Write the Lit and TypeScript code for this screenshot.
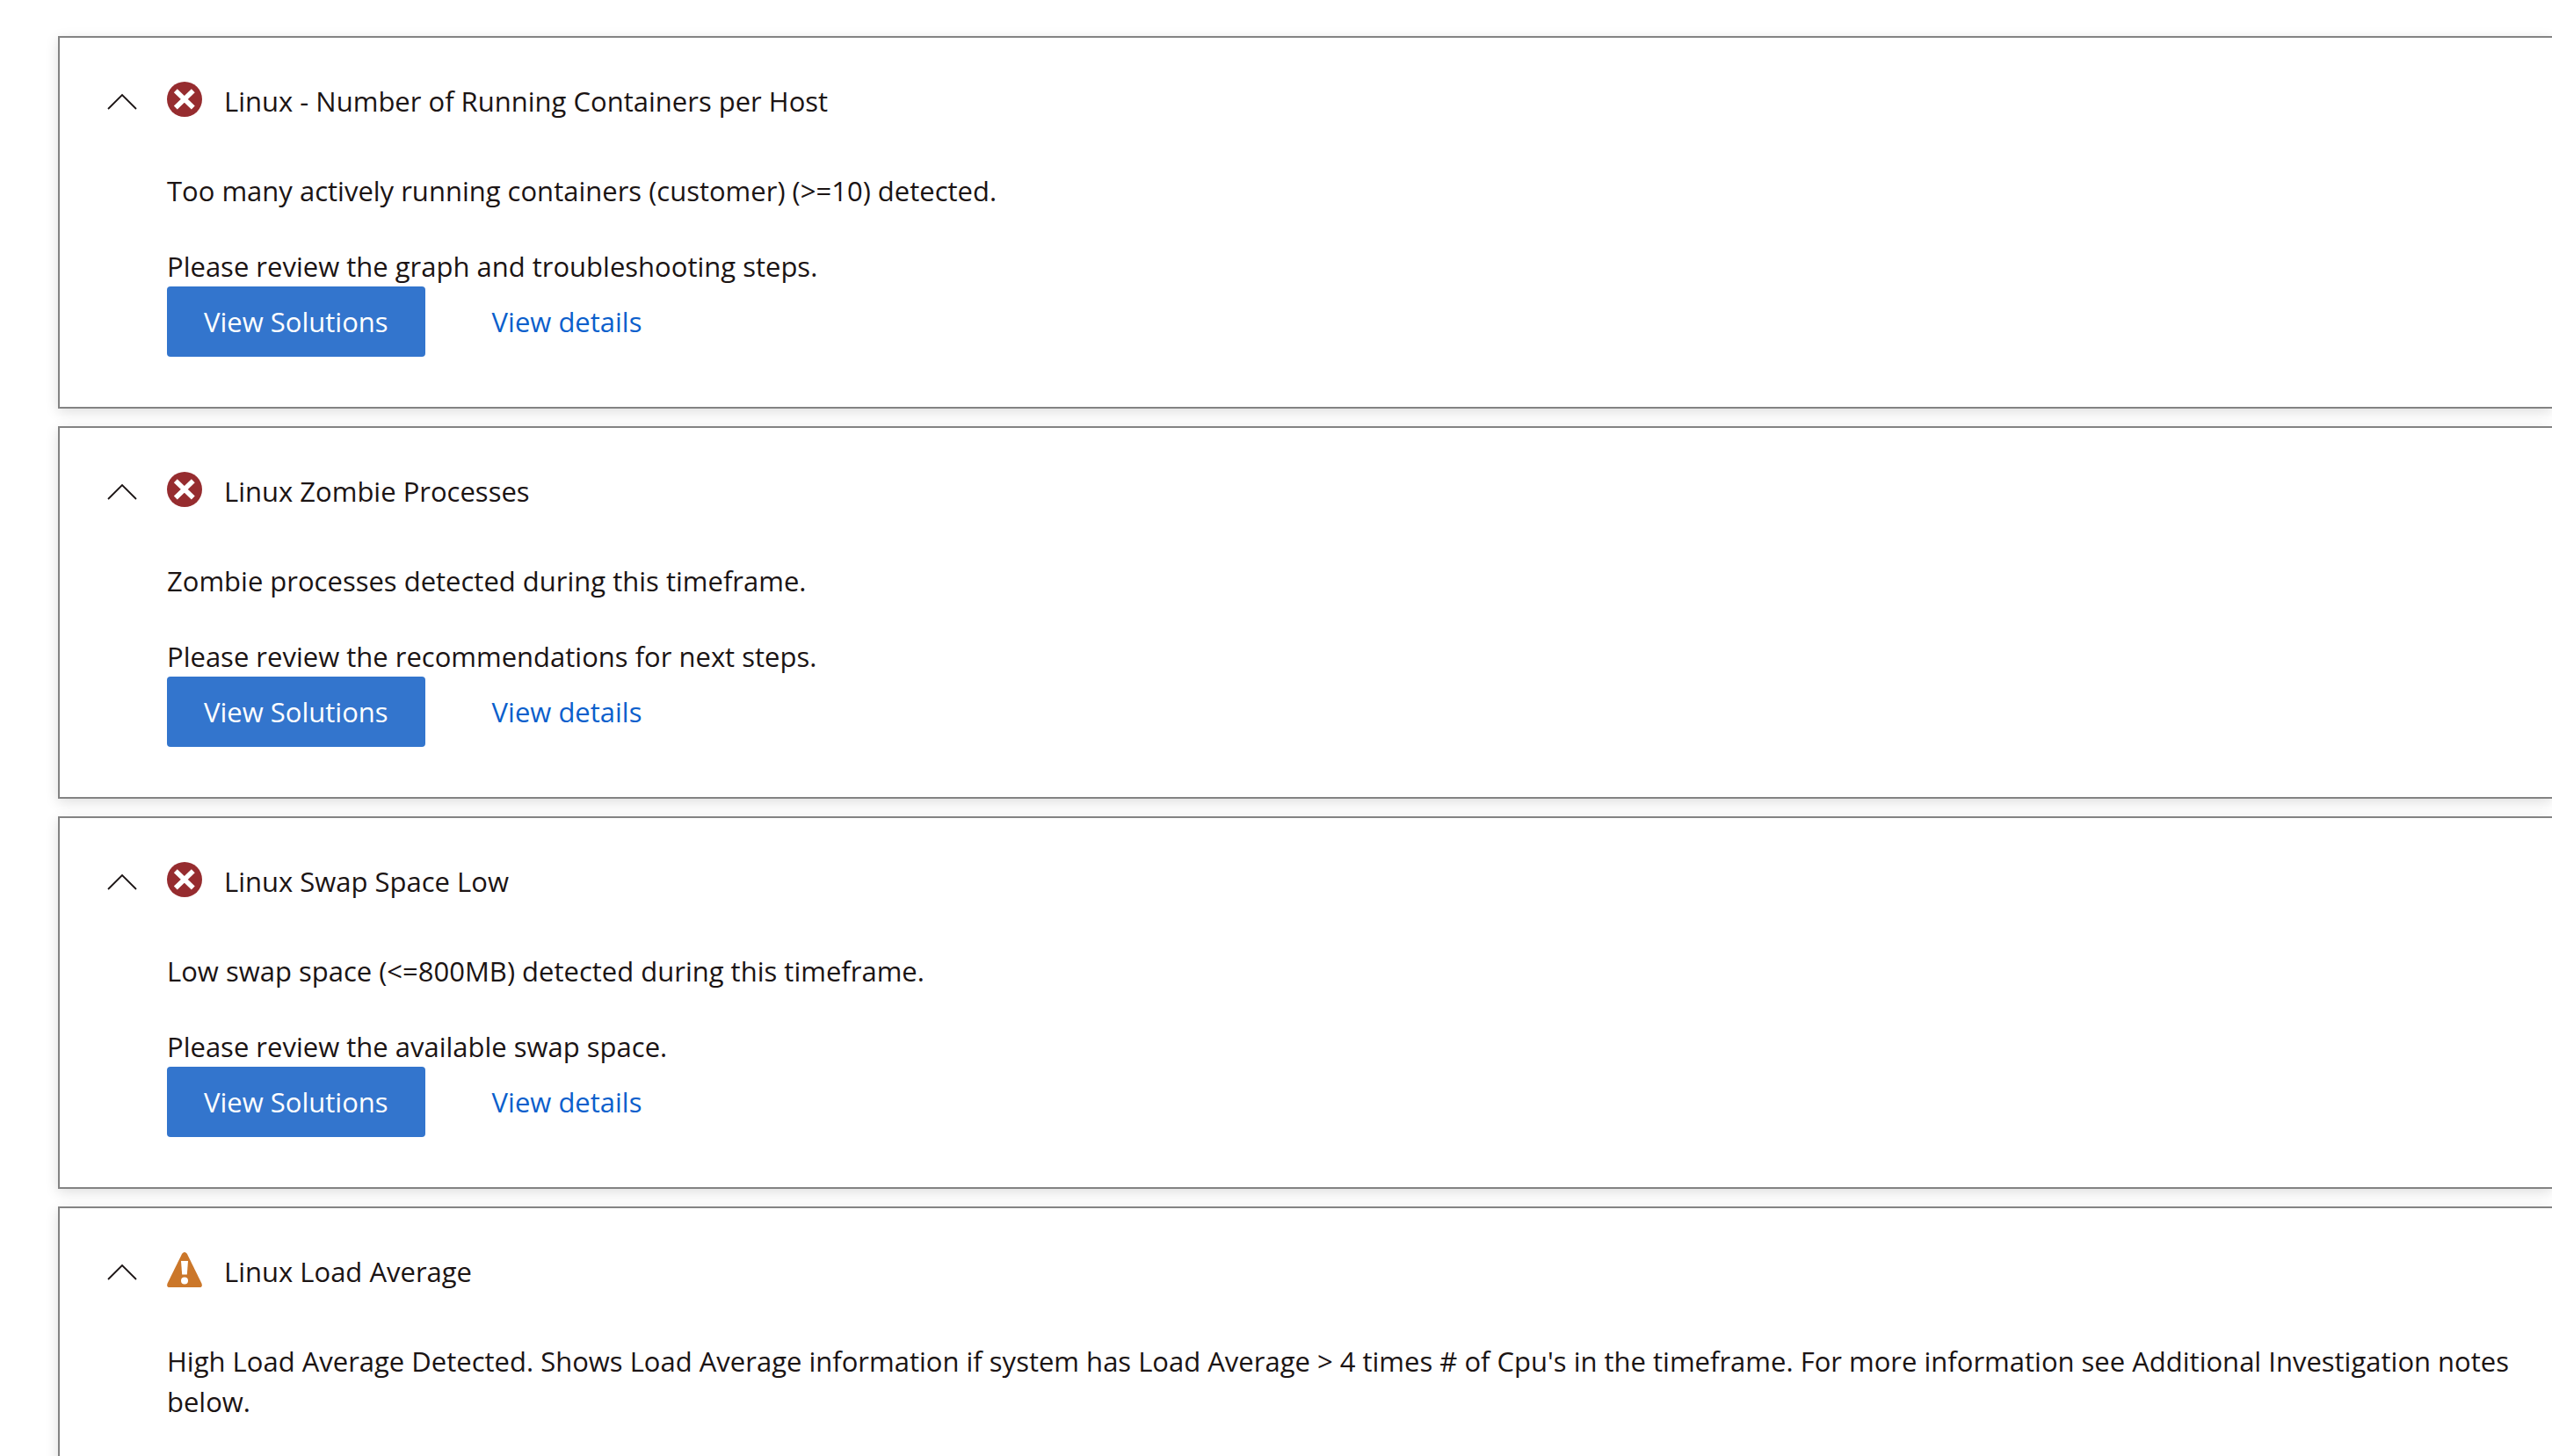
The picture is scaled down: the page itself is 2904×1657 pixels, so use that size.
import { LitElement, html, css, svg, nothing } from "lit";
import { customElement, property, state } from "lit/decorators.js";

type Severity = "error" | "warning";

interface Insight {
  severity: Severity;
  title: string;
  lines: string[];
  actions: boolean;
}

const INSIGHTS: Insight[] = [
  {
    severity: "error",
    title: "Linux - Number of Running Containers per Host",
    lines: [
      "Too many actively running containers (customer) (>=10) detected.",
      "Please review the graph and troubleshooting steps.",
    ],
    actions: true,
  },
  {
    severity: "error",
    title: "Linux Zombie Processes",
    lines: [
      "Zombie processes detected during this timeframe.",
      "Please review the recommendations for next steps.",
    ],
    actions: true,
  },
  {
    severity: "error",
    title: "Linux Swap Space Low",
    lines: [
      "Low swap space (<=800MB) detected during this timeframe.",
      "Please review the available swap space.",
    ],
    actions: true,
  },
  {
    severity: "warning",
    title: "Linux Load Average",
    lines: [
      "High Load Average Detected. Shows Load Average information if system has Load Average > 4 times # of Cpu's in the timeframe. For more information see Additional Investigation notes below.",
    ],
    actions: false,
  },
];

const errorIcon = svg`
  <circle cx="20" cy="20" r="20" fill="#962c2f"></circle>
  <path d="M9.8 10.2 L29.8 29.6 M29.8 10.2 L9.8 29.6" stroke="#fff" stroke-width="5.6" fill="none"></path>`;

const warningIcon = svg`
  <path d="M17.2 1.8 Q20 -1.6 22.8 1.8 L39.4 35.4 Q41 40 37 40 H3 Q-1 40 0.6 35.4 Z" fill="#cb772a"></path>
  <path d="M16 10 H24 L22.8 25.4 H17.2 Z" fill="#fff"></path>
  <circle cx="20" cy="32.4" r="4" fill="#fff"></circle>`;

@customElement("insight-card")
export class InsightCard extends LitElement {
  @property({ attribute: false }) insight!: Insight;
  @state() private open = true;

  static styles = css`
    :host {
      display: block;
      box-sizing: border-box;
      border: 2px solid #838383;
      border-right: none;
      background: #fff;
      box-shadow: 0 4px 14px rgba(0, 0, 0, 0.13);
      padding: 44px 40px 57px 54px;
    }
    .header {
      display: flex;
      align-items: center;
      height: 56px;
    }
    .toggle {
      width: 36px;
      height: 40px;
      margin-right: 32px;
      padding: 0;
      border: none;
      background: none;
      cursor: pointer;
    }
    .chevron {
      display: block;
      width: 36px;
      height: 40px;
    }
    .closed {
      transform: rotate(180deg);
    }
    .status {
      flex: none;
      width: 40px;
      height: 40px;
      margin: 0 25px 4px 0;
    }
    .title {
      margin: 0;
      font-size: 31px;
      line-height: 46px;
      font-weight: 400;
    }
    .body {
      padding: 51px 0 0 68px;
    }
    .text {
      margin: 0 0 40px;
      line-height: 46px;
    }
    .text:last-of-type {
      margin-bottom: 0;
    }
    .actions {
      display: flex;
      align-items: center;
      gap: 76px;
    }
    .solutions {
      height: 80px;
      padding: 0 42px;
      border: none;
      border-radius: 4px;
      background: #3375cd;
      color: #fff;
      font: inherit;
      cursor: pointer;
    }
    .details {
      color: #0b5fcc;
      text-decoration: none;
    }
  `;

  render() {
    const { severity, title, lines, actions } = this.insight;
    return html`
      <div class="header">
        <button
          class="toggle"
          aria-label=${title}
          aria-expanded=${this.open ? "true" : "false"}
          @click=${() => (this.open = !this.open)}
        >
          <svg class="chevron ${this.open ? "" : "closed"}" viewBox="0 0 36 40" aria-hidden="true">
            <path d="M1 29 L17 13 L33 29" fill="none" stroke="#1b1414" stroke-width="1.8"></path>
          </svg>
        </button>
        <svg class="status" viewBox="0 0 40 40" aria-hidden="true">
          ${severity === "error" ? errorIcon : warningIcon}
        </svg>
        <h2 class="title">${title}</h2>
      </div>
      ${this.open
        ? html`<div class="body">
            ${lines.map((line) => html`<p class="text">${line}</p>`)}
            ${actions
              ? html`<div class="actions">
                  <button class="solutions">View Solutions</button>
                  <a class="details" href="#details">View details</a>
                </div>`
              : nothing}
          </div>`
        : nothing}
    `;
  }
}

@customElement("app-root")
export class AppRoot extends LitElement {
  static styles = css`
    :host {
      display: block;
      box-sizing: border-box;
      height: 100vh;
      overflow: hidden;
      background: #fff;
      color: #1b1414;
      font-family: "Open Sans", "Noto Sans", sans-serif;
      font-size: 31px;
    }
    .list {
      display: flex;
      flex-direction: column;
      gap: 20px;
      padding: 41px 0 41px 66px;
    }
  `;

  render() {
    return html`<main class="list">
      ${INSIGHTS.map((insight) => html`<insight-card .insight=${insight}></insight-card>`)}
    </main>`;
  }
}
